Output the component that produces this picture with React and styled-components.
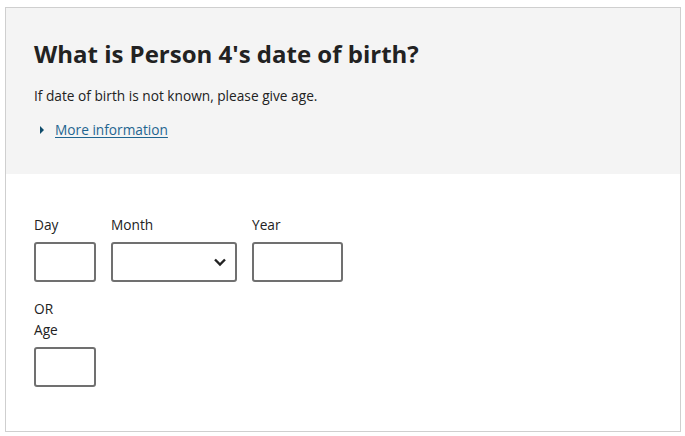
import React from 'react';
import styled, { createGlobalStyle } from 'styled-components';

const GlobalStyle = createGlobalStyle`
  body {
    margin: 0;
    background: #ffffff;
    font-family: "Open Sans", "Noto Sans", sans-serif;
    color: #222222;
  }
`;

const Page = styled.div`
  padding: 7px 4px 3px 5px;
`;

const Card = styled.div`
  border: 1px solid #cfcfcf;
  height: 425px;
  box-sizing: border-box;
  display: flex;
  flex-direction: column;
`;

const Header = styled.div`
  background: #f4f4f4;
  height: 166px;
  box-sizing: border-box;
  padding: 30px 29px 0 28px;
`;

const Title = styled.h1`
  margin: 0;
  font-size: 24px;
  line-height: 32px;
  font-weight: 700;
  color: #222222;
`;

const Hint = styled.p`
  margin: 16px 0 0 0;
  font-size: 13.7px;
  line-height: 20px;
  color: #222222;
`;

const Details = styled.div`
  margin-top: 14px;
  display: flex;
  align-items: center;
  gap: 11px;
`;

const Caret = styled.span`
  width: 0;
  height: 0;
  border-top: 4px solid transparent;
  border-bottom: 4px solid transparent;
  border-left: 4px solid #0f4c6b;
  margin-left: 6px;
`;

const InfoLink = styled.a`
  font-size: 13.7px;
  line-height: 20px;
  color: #1f6590;
  text-decoration: underline;
  text-underline-offset: 2px;
`;

const Body = styled.div`
  padding: 41px 29px 0 28px;
  display: flex;
  flex-direction: column;
`;

const DateRow = styled.div`
  display: flex;
  gap: 15px;
`;

const Field = styled.div`
  display: flex;
  flex-direction: column;
`;

const Label = styled.label`
  font-size: 13.7px;
  line-height: 20px;
  margin-bottom: 7px;
  color: #222222;
`;

const Input = styled.div`
  width: ${(p) => p.$width}px;
  height: 40px;
  box-sizing: border-box;
  border: 2px solid #707070;
  border-radius: 3px;
  background: #ffffff;
  display: flex;
  align-items: center;
  justify-content: flex-end;
  padding-right: 8px;
`;

const OrText = styled.div`
  margin-top: 17px;
  font-size: 13.7px;
  line-height: 20px;
`;

const AgeField = styled(Field)`
  margin-top: 1px;
`;

export default function App() {
  return (
    <Page>
      <GlobalStyle />
      <Card>
        <Header>
          <Title>What is Person 4's date of birth?</Title>
          <Hint>If date of birth is not known, please give age.</Hint>
          <Details>
            <Caret />
            <InfoLink href="#more">More information</InfoLink>
          </Details>
        </Header>
        <Body>
          <DateRow>
            <Field>
              <Label>Day</Label>
              <Input $width={62} />
            </Field>
            <Field>
              <Label>Month</Label>
              <Input $width={126}>
                <svg width="14" height="10" viewBox="0 0 14 10">
                  <path d="M2 2.5 L7 7.5 L12 2.5" fill="none" stroke="#222" strokeWidth="2.4" />
                </svg>
              </Input>
            </Field>
            <Field>
              <Label>Year</Label>
              <Input $width={91} />
            </Field>
          </DateRow>
          <OrText>OR</OrText>
          <AgeField>
            <Label>Age</Label>
            <Input $width={62} />
          </AgeField>
        </Body>
      </Card>
    </Page>
  );
}
